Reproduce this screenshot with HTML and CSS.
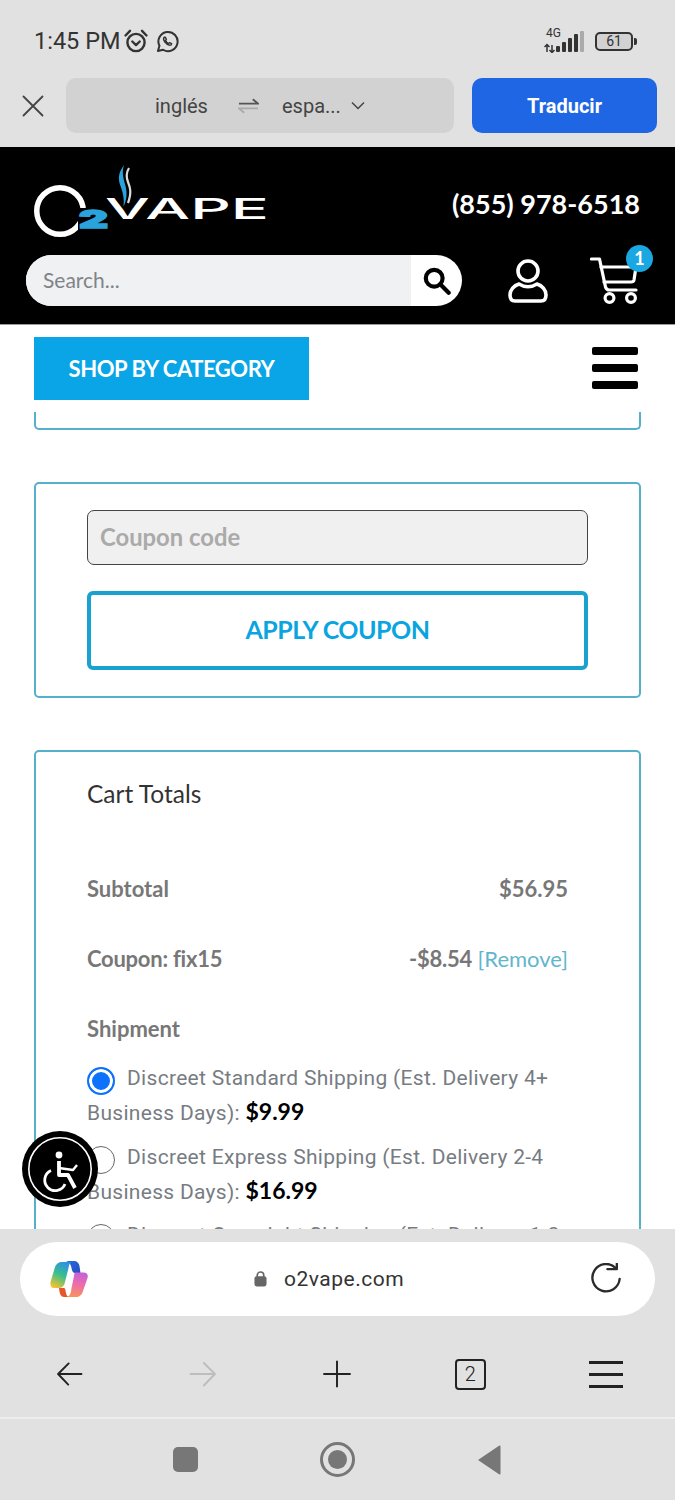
FILE: index.html
```html
<!DOCTYPE html>
<html lang="es">
<head>
<meta charset="utf-8">
<title>O2Vape cart</title>
<link rel="stylesheet" href="styles.css">
</head>
<body>
<div class="screen">
  <div class="status">
    <div class="status-left">
      <span class="time">1:45 PM</span>
      <svg class="ic-alarm" viewBox="0 0 26 26" fill="none" stroke="#333" stroke-width="2.4" stroke-linecap="round" stroke-linejoin="round"><circle cx="13" cy="14.5" r="8.6"/><path d="M9.3 13.5l3.7 3.6 3.7-3.6"/><path d="M2.5 7.5L7 2.8M23.5 7.5L19 2.8"/></svg>
      <svg class="ic-wa" viewBox="0 0 24 24" fill="none" stroke="#333" stroke-width="2.1" stroke-linejoin="round" stroke-linecap="round"><path d="M2 22l1.6-5.5A10 10 0 1 1 7.4 20.6z"/><path d="M8.6 7.6c-1 1-1 2.6.5 4.8 1.6 2.2 3.500 3.500 5.300 3.600 1 0 1.800-.7 1.900-1.700l-2.200-1.100-1 1c-1.500-.6-2.600-1.700-3.200-3.200l.9-1-1-2.400z" stroke-width="1.500"/></svg>
    </div>
    <div class="status-right">
      <div class="net">
        <span class="net-label">4G</span>
        <svg class="ic-signal" viewBox="0 0 42 22"><path d="M3 14v7M0.500 16l2.500-2.500L5.500 16M8 21v-7M5.500 19l2.500 2.500L10.500 19" stroke="#333" stroke-width="1.500" fill="none"/><g fill="#333"><rect x="12" y="15" width="4" height="6" rx="1"/><rect x="18" y="11" width="4" height="10" rx="1"/><rect x="24" y="7" width="4" height="14" rx="1"/><rect x="30" y="3" width="4" height="18" rx="1"/></g><rect x="36" y="0" width="4" height="21" rx="1" fill="#aaa"/></svg>
      </div>
      <div class="battery"><span class="battery-body">61</span><span class="battery-tip"></span></div>
    </div>
  </div>

  <div class="translate">
    <svg class="ic-close" viewBox="0 0 22 22" stroke="#444" stroke-width="1.800" stroke-linecap="round"><path d="M1.500 1.500l19 19M20.500 1.500l-19 19"/></svg>
    <div class="lang-pill">
      <span class="lang-from">inglés</span>
      <svg class="ic-swap" viewBox="0 0 22 16" fill="none" stroke-width="2"><path d="M1 5.500h20L15.500 1" stroke="#555"/><path d="M21 10.500H1l5.500 4.500" stroke="#aaa"/></svg>
      <span class="lang-to">espa...</span>
      <svg class="ic-chev" viewBox="0 0 14 9" fill="none" stroke="#444" stroke-width="1.500"><path d="M1 1.500l6 6 6-6"/></svg>
    </div>
    <div class="translate-btn">Traducir</div>
  </div>

  <header class="site-header">
    <div class="header-top">
      <svg class="logo" viewBox="0 0 240 75" role="img" aria-label="O2Vape">
        <circle cx="26" cy="46" r="23.250" fill="none" stroke="#fff" stroke-width="5.500"/>
        <rect x="44" y="43" width="32" height="24" fill="#000"/>
        <text class="logo-two" x="45" y="63" textLength="29" lengthAdjust="spacingAndGlyphs">2</text>
        <text class="logo-vape" x="71" y="54" textLength="164" lengthAdjust="spacingAndGlyphs">VAPE</text>
        <path d="M90 0c-6 8-6 14-3.500 21s4 13 3 21c3-7 4-13 2-21S87.500 8 90 0z" fill="#2aa3dc"/>
        <path d="M95 3c-3 5-3 9-1 14s4 10 0 21" fill="none" stroke="#ddd" stroke-width="2.200"/>
      </svg>
      <a class="phone">(855) 978-6518</a>
    </div>
    <div class="header-bottom">
      <div class="search">
        <span class="search-field">Search...</span>
        <span class="search-btn">
          <svg class="ic-search" viewBox="0 0 30 30" fill="none" stroke="#000" stroke-width="4.500"><circle cx="12" cy="12" r="9"/><path d="M18.500 18.500L27.500 27.500" stroke-linecap="round"/></svg>
        </span>
      </div>
      <svg class="ic-user" viewBox="0 0 40 44" fill="none" stroke="#fff" stroke-width="3.600" stroke-linejoin="round"><circle cx="20" cy="12" r="10"/><path d="M11 25c-5 1.500-9 6-9 11 0 4 2 6 5 6h26c3 0 5-2 5-6 0-5-4-9.500-9-11-5.500 3.500-12.500 3.500-18 0z"/></svg>
      <div class="cart">
        <svg class="ic-cart" viewBox="0 0 50 48" fill="none" stroke="#fff" stroke-width="3.200" stroke-linecap="round" stroke-linejoin="round"><path d="M1.500 2H9.500l6 28c.6 2 2 3 4 3H46"/><path d="M11 10h35l-2 13c-.3 1.500-1.300 2-3 2H14"/><circle cx="19.500" cy="41" r="4.400"/><circle cx="41" cy="41" r="4.400"/></svg>
        <span class="cart-badge">1</span>
      </div>
    </div>
  </header>

  <div class="subnav">
    <div class="category-btn">SHOP BY CATEGORY</div>
    <div class="burger"><span></span><span></span><span></span></div>
  </div>

  <main class="content">
    <div class="card card-stub"></div>

    <section class="card coupon-card">
      <div class="coupon-input">Coupon code</div>
      <div class="coupon-btn">APPLY COUPON</div>
    </section>

    <section class="card totals-card">
      <h2 class="totals-title">Cart Totals</h2>
      <div class="totals-row row-subtotal"><span class="label">Subtotal</span><span class="label">$56.95</span></div>
      <div class="totals-row row-coupon"><span class="label">Coupon: fix15</span><span class="amount"><b class="label">-$8.54</b> <a class="remove">[Remove]</a></span></div>
      <div class="shipment label">Shipment</div>
      <div class="ship-option"><span class="radio radio-on"></span>Discreet Standard Shipping (Est. Delivery 4+ Business Days): <b class="price">$9.99</b></div>
      <div class="ship-option"><span class="radio"></span>Discreet Express Shipping (Est. Delivery 2-4 Business Days): <b class="price">$16.99</b></div>
      <div class="ship-option"><span class="radio"></span>Discreet Overnight Shipping (Est. Delivery 1-3 Business Days): <b class="price">$39.99</b></div>
    </section>

    <div class="a11y">
      <svg class="ic-a11y" viewBox="0 0 64 64" fill="none" stroke="#fff" stroke-linejoin="round"><circle cx="32" cy="32" r="31.200" stroke-width="1.600"/><circle cx="31" cy="18" r="3.400" fill="#fff" stroke="none"/><path d="M31 24v14h9l7 13" stroke-width="3.800"/><path d="M31 31l14 2 4-5" stroke-width="2.400"/><path d="M23 33.500A10.500 10.500 0 1 0 37 47" stroke-width="2.800"/></svg>
    </div>
  </main>

  <div class="browser-bar">
    <div class="url-pill">
      <svg class="ic-copilot" viewBox="0 0 38 38">
        <defs>
          <linearGradient id="cpA" x1="0.700" y1="0" x2="0.300" y2="1"><stop offset="0" stop-color="#2c8fe6"/><stop offset="0.500" stop-color="#38c08c"/><stop offset="1" stop-color="#f2c230"/></linearGradient>
          <linearGradient id="cpB" x1="0.600" y1="0" x2="0.400" y2="1"><stop offset="0" stop-color="#c65fd8"/><stop offset="0.500" stop-color="#ee6fa8"/><stop offset="1" stop-color="#f9915a"/></linearGradient>
          <linearGradient id="cpC" x1="0" y1="0" x2="1" y2="1"><stop offset="0" stop-color="#1f6fe0"/><stop offset="1" stop-color="#2b4cc0"/></linearGradient>
        </defs>
        <path d="M16 1h8c3 0 5 2 5.500 5L30.500 13H25c-2 0-3-2-3.500-5C21 4.500 19 2 16 1z" fill="url(#cpC)"/>
        <path d="M12 2h9c-1.500 1-2 3-2.500 6L15 22c-.7 4-3 6-6 6H4C1 28 0 25 .5 22L5 7c1-3 3.500-5 7-5z" fill="url(#cpA)"/>
        <path d="M9 28h5c1.500 0 1.500 3 2 5 .5 2.500 1.500 4 4 4h-6c-3 0-4.500-3-5-9z" fill="#e8552a"/>
        <path d="M25 12.500h8.500c3.500 0 5 2.500 4 5.500L33 31c-1 4-4 6-7 6h-9c3-1 4-4 4.500-9L24 16c.3-2 .5-3.500 1-3.500z" fill="url(#cpB)"/>
      </svg>
      <div class="url">
        <svg class="ic-lock" viewBox="0 0 14 17"><path d="M3.500 7V4.500a3.500 3.500 0 0 1 7 0V7" fill="none" stroke="#666" stroke-width="1.800"/><rect x="0.500" y="5.500" width="13" height="11" rx="2.500" fill="#666"/></svg>
        <span class="url-text">o2vape.com</span>
      </div>
      <svg class="ic-reload" viewBox="0 0 34 34" fill="none" stroke="#2b2b2b" stroke-width="2.500" stroke-linecap="round" stroke-linejoin="round"><path d="M27.500 5.500A14.500 14.500 0 1 0 31.500 17"/><path d="M18.500 6.500H28.500V0.800" /></svg>
    </div>
    <nav class="nav-icons">
      <svg class="ic-nav" viewBox="0 0 34 34" fill="none" stroke="#222" stroke-width="2.200" stroke-linecap="round" stroke-linejoin="round"><path d="M30 17H4M15.500 5L3.500 17l11.500 12"/></svg>
      <svg class="ic-nav" viewBox="0 0 34 34" fill="none" stroke="#bdbdbd" stroke-width="2.200" stroke-linecap="round" stroke-linejoin="round"><path d="M3 17h27M18 4.500L30.500 17 18 30"/></svg>
      <svg class="ic-nav" viewBox="0 0 34 34" fill="none" stroke="#222" stroke-width="2.200"><path d="M17 2v30M1.500 17h31"/></svg>
      <div class="tab-count">2</div>
      <div class="nav-menu"><span></span><span></span><span></span></div>
    </nav>
  </div>

  <div class="system-nav">
    <span class="sys-square"></span>
    <span class="sys-circle"><span class="sys-dot"></span></span>
    <svg class="sys-back" viewBox="0 0 24 30"><path d="M23.500 1.500v27c0 1-.8 1.300-1.500.7L1 15 22 .8c.7-.5 1.500-.2 1.500.7z" fill="#777"/></svg>
  </div>
</div>
</body>
</html>
```
FILE: styles.css
```css
* { box-sizing: border-box; }
html, body { margin: 0; padding: 0; }
body { font-family: "Lato", sans-serif; background: #e1e1e1; }
svg { display: block; flex: none; }

.screen { width: 675px; height: 1500px; display: flex; flex-direction: column; overflow: hidden; background: #e1e1e1; }

/* status bar */
.status { height: 78px; flex: none; padding: 26px 38px 0 34px; display: flex; justify-content: space-between; align-items: flex-start; }
.status-left { display: flex; align-items: center; gap: 3px; height: 30px; }
.time { font: 400 23.500px/30px "Roboto", sans-serif; color: #333; }
.ic-alarm { width: 26px; height: 26px; }
.ic-wa { width: 23px; height: 23px; margin-left: 4px; }
.status-right { display: flex; align-items: center; gap: 9px; height: 30px; }
.net { position: relative; width: 42px; height: 24px; }
.net-label { position: absolute; left: 2px; top: -2px; font: 400 12px/12px "Roboto", sans-serif; color: #333; }
.ic-signal { position: absolute; left: 0; top: 2px; width: 42px; height: 22px; }
.battery { display: flex; align-items: center; }
.battery-body { width: 38px; height: 19px; border: 2px solid #333; border-radius: 5px; background: #d2d2d2; font: 400 14px/15px "Roboto", sans-serif; color: #333; text-align: center; }
.battery-tip { width: 3px; height: 7px; margin-left: 1px; background: #333; border-radius: 0 2px 2px 0; }

/* translate bar */
.translate { height: 69px; flex: none; padding: 0 18px 14px 22px; display: flex; align-items: center; }
.ic-close { width: 22px; height: 22px; }
.lang-pill { width: 388px; height: 55px; margin-left: 22px; background: #d2d2d2; border-radius: 10px; position: relative; display: flex; align-items: center; font: 400 20px/24px "Roboto", sans-serif; color: #444; padding-left: 89px; }
.lang-from { width: 83px; }
.ic-swap { width: 21px; height: 16px; }
.lang-to { margin-left: 23px; width: 58px; }
.ic-chev { width: 14px; height: 9px; margin-left: 11px; }
.translate-btn { width: 185px; height: 55px; margin-left: 18px; background: #1f66e5; border-radius: 10px; color: #fff; font: 700 20px/57px "Roboto", sans-serif; text-align: center; }

/* site header */
.site-header { height: 178px; flex: none; background: #000; padding: 18px 35px 18px 26px; display: flex; flex-direction: column; justify-content: space-between; border-bottom: 1px solid #999; }
.header-top { display: flex; justify-content: space-between; align-items: flex-start; }
.logo { width: 240px; height: 75px; margin-left: 8px; }
.logo-two { font: 900 25px "Inter", sans-serif; fill: #2aa3dc; stroke: #2aa3dc; stroke-width: 1.600px; }
.logo-vape { font: 500 28px "Inter", sans-serif; fill: #fff; }
.phone { font: 700 27px/34px "Lato", sans-serif; color: #fff; margin-top: 22px; }
.header-bottom { display: flex; align-items: center; height: 51px; }
.search { width: 436px; height: 51px; border-radius: 26px; overflow: hidden; display: flex; background: #fff; }
.search-field { width: 385px; background: #f0f1f3; padding-left: 17px; font: 400 21px/50px "Lato", sans-serif; color: #808388; }
.search-btn { flex: 1; display: flex; align-items: center; padding-left: 12px; }
.ic-search { width: 28px; height: 28px; }
.ic-user { width: 40px; height: 44px; margin-left: 46px; }
.cart { position: relative; margin-left: 42px; width: 50px; height: 48px; }
.ic-cart { width: 50px; height: 48px; }
.cart-badge { position: absolute; right: -13px; top: -12px; width: 27px; height: 27px; border-radius: 50%; background: #1aa7e2; color: #fff; font: 700 18px/27px "Lato", sans-serif; text-align: center; }

/* sub navigation */
.subnav { height: 87px; flex: none; background: #fff; padding: 12px 37px 0 34px; display: flex; justify-content: space-between; align-items: flex-start; }
.category-btn { width: 275px; height: 63px; background: #0aa5e6; color: #fff; font: 700 22px/63px "Lato", sans-serif; text-align: center; letter-spacing: -0.450px; }
.burger { width: 46px; display: flex; flex-direction: column; gap: 9px; margin-top: 10px; }
.burger span { height: 8px; background: #000; border-radius: 2px; }

/* page content */
.content { flex: 1; min-height: 0; position: relative; overflow: hidden; background: #fff; padding: 0 34px; display: flex; flex-direction: column; gap: 52px; }
.card { flex: none; border: 2px solid #56b0ca; border-radius: 5px; background: #fff; }
.card-stub { height: 18px; border-top: 0; border-radius: 0 0 5px 5px; }
.coupon-card { height: 216px; padding: 26px 51px 0; }
.coupon-input { height: 55px; background: #f1f0f0; border: 1.500px solid #444; border-radius: 7px; padding-left: 12px; font: 700 23.800px/52px "Lato", sans-serif; color: #aaa; }
.coupon-btn { height: 79px; margin-top: 26px; border: 4px solid #19a1d0; border-radius: 6px; font: 700 25px/69px "Lato", sans-serif; color: #0aa5e0; text-align: center; letter-spacing: -0.500px; }

.totals-card { height: 600px; padding: 26px 71px 0 51px; }
.totals-title { margin: 0; font: 400 24.500px/32px "Lato", sans-serif; color: #333; }
.totals-row { display: flex; justify-content: space-between; height: 30px; align-items: center; }
.row-subtotal { margin-top: 64px; }
.row-coupon { margin-top: 40px; }
.row-coupon .label { letter-spacing: -0.250px; }
.label { font: 700 22px/30px "Lato", sans-serif; color: #777; }
.amount { font: 400 22px/30px "Lato", sans-serif; }
.remove { color: #62b5cf; }
.shipment { margin-top: 40px; }
.ship-option { font: 400 21px/35px "Roboto", sans-serif; color: #777c82; letter-spacing: 0.300px; margin-bottom: 8.500px; }
.shipment + .ship-option { margin-top: 17px; }
.radio { display: inline-block; width: 28px; height: 28px; border: 1.500px solid #666; border-radius: 50%; margin: -8px 12px -8px 0; vertical-align: -2px; background: #fff; }
.radio-on { border: 2px solid #0d72fb; background: #0d72fb; box-shadow: inset 0 0 0 3px #fff; }
.price { font: 700 23px/20px "Lato", sans-serif; color: #000; letter-spacing: 0; }

.a11y { position: absolute; left: 22px; top: 719px; width: 76px; height: 76px; border-radius: 50%; background: #000; display: flex; align-items: center; justify-content: center; }
.ic-a11y { width: 64px; height: 64px; }

/* browser toolbar */
.browser-bar { height: 190px; flex: none; background: #e1e1e1; padding: 13px 20px 0; border-bottom: 2px solid #eeeeee; }
.url-pill { height: 74px; background: #fff; border-radius: 37px; display: flex; align-items: center; padding: 0 33px 0 30px; }
.ic-copilot { width: 38px; height: 38px; }
.url { display: flex; align-items: center; margin-left: 166px; flex: 1; gap: 17px; }
.ic-lock { width: 13px; height: 16px; }
.url-text { font: 400 21px/26px "Roboto", sans-serif; color: #333; letter-spacing: 0.500px; }
.ic-reload { width: 32px; height: 32px; }
.nav-icons { display: flex; justify-content: space-between; align-items: center; height: 32px; margin-top: 42px; padding: 0 32px 0 35px; }
.ic-nav { width: 30px; height: 30px; }
.tab-count { width: 31px; height: 31px; border: 2px solid #222; border-radius: 4px; font: 300 20px/27px "Roboto", sans-serif; color: #222; text-align: center; }
.nav-menu { width: 34px; display: flex; flex-direction: column; gap: 9px; }
.nav-menu span { height: 3px; background: #222; }

/* system navigation */
.system-nav { height: 81px; flex: none; display: flex; align-items: center; justify-content: center; position: relative; gap: 122px; padding-right: 2px; }
.sys-square { width: 25px; height: 25px; background: #777; border-radius: 5px; }
.sys-circle { width: 35px; height: 35px; border: 3px solid #777; border-radius: 50%; display: flex; align-items: center; justify-content: center; }
.sys-dot { width: 19px; height: 19px; background: #777; border-radius: 50%; }
.sys-back { width: 24px; height: 30px; }
```
